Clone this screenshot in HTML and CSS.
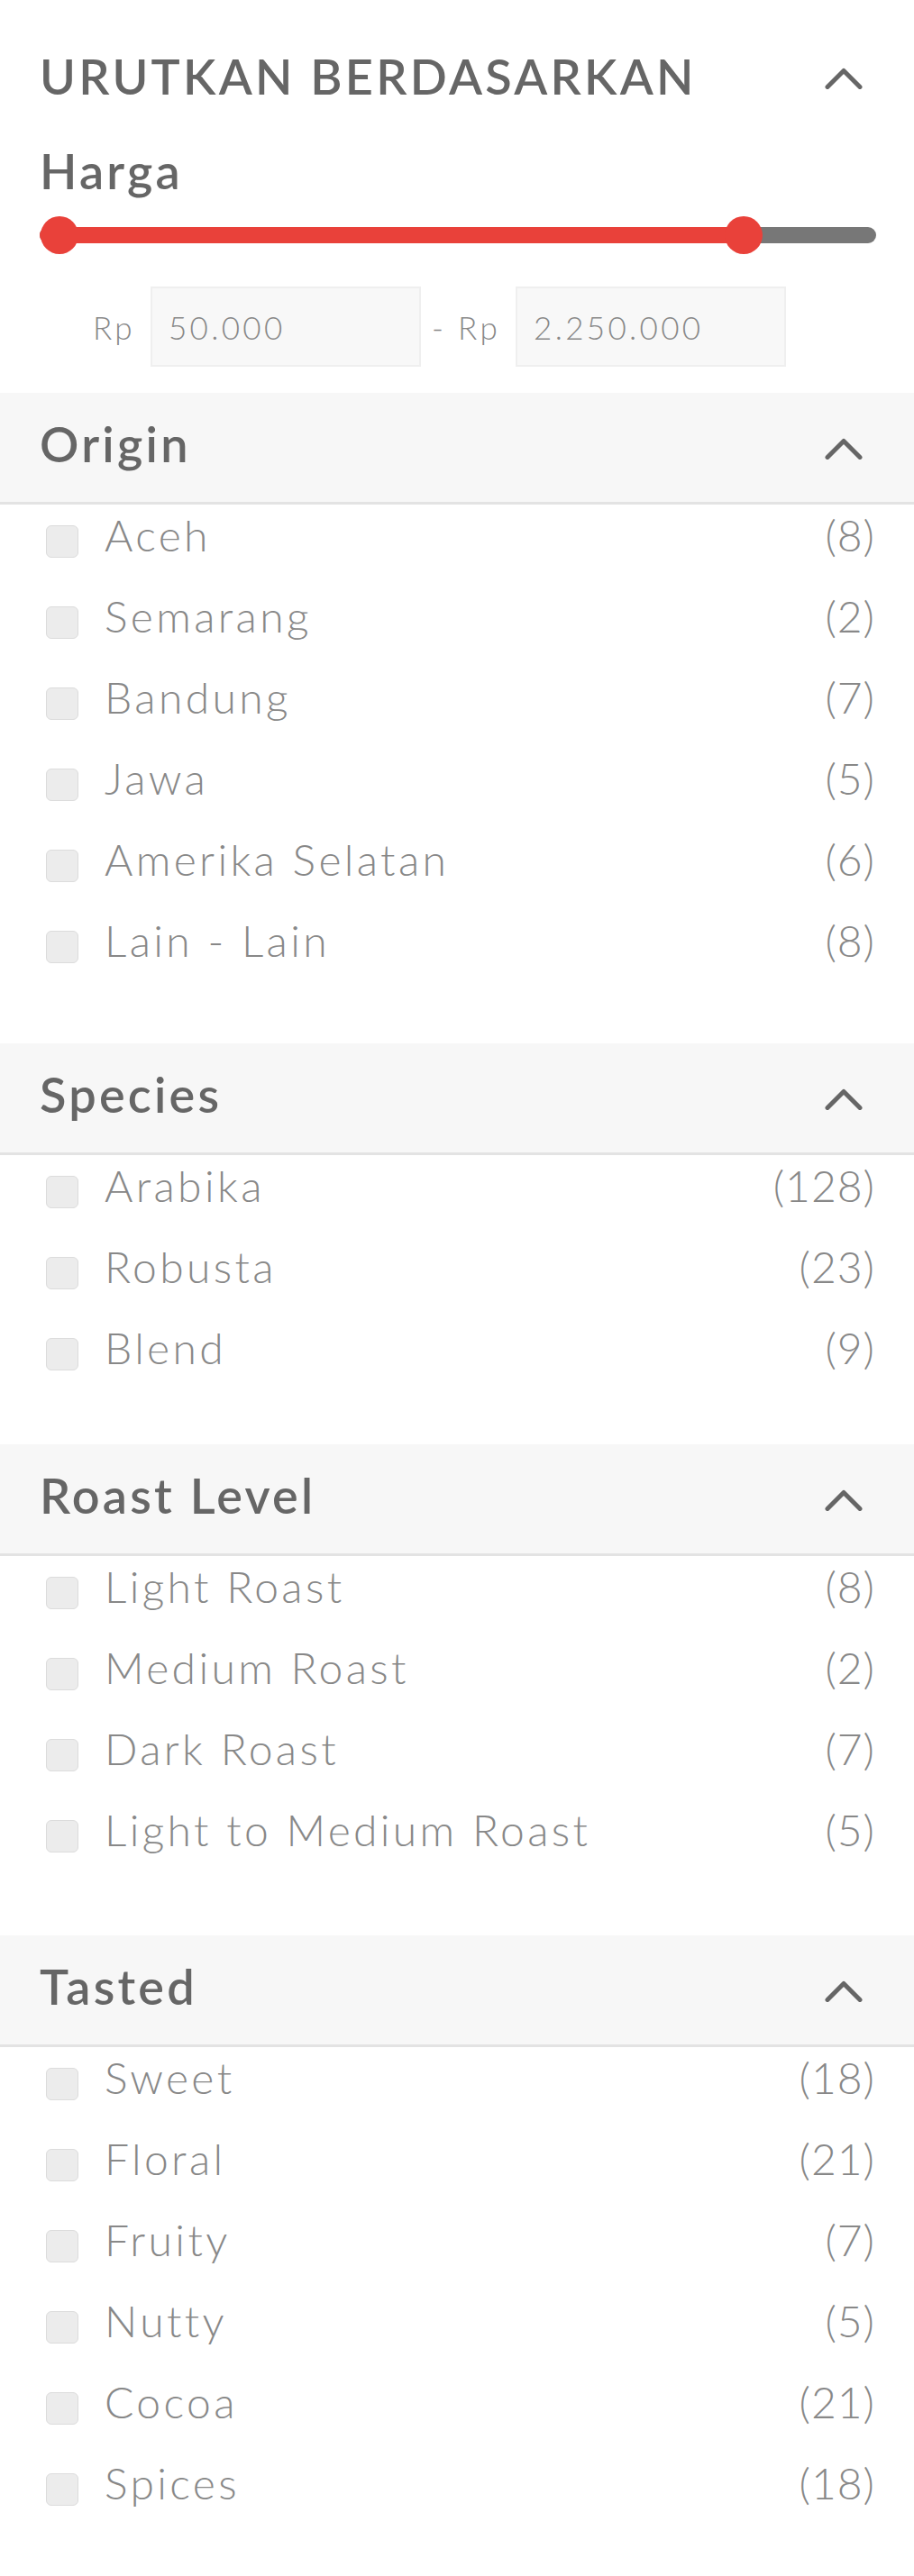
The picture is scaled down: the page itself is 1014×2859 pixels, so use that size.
FILE: index.html
```html
<!DOCTYPE html>
<html lang="id">
<head>
<meta charset="utf-8">
<title>Filter</title>
<link rel="stylesheet" href="styles.css">
</head>
<body>
<div class="panel">
  <div class="sort">
    <div class="sort-head">
      <h2 class="sort-title">URUTKAN BERDASARKAN</h2>
      <svg class="chev chev-title" viewBox="0 0 42 24" width="42" height="24"><path d="M3 21.5 L21 3.5 L39 21.5"/></svg>
    </div>
    <div class="price-label">Harga</div>
    <div class="slider">
      <div class="track"><div class="fill" style="width:84.2%"></div></div>
      <span class="knob" style="left:1px"></span>
      <span class="knob" style="left:calc(84.2% - 21px)"></span>
    </div>
    <div class="price-row">
      <span class="cur">Rp</span>
      <div class="price-box">50.000</div>
      <span class="cur">- Rp</span>
      <div class="price-box">2.250.000</div>
    </div>
  </div>

  <section class="group">
    <div class="group-head">
      <h3 class="group-title">Origin</h3>
      <svg class="chev chev-group" viewBox="0 0 42 24" width="42" height="24"><path d="M3 21.5 L21 3.5 L39 21.5"/></svg>
    </div>
    <ul class="opts">
      <li class="opt"><span class="box"></span><span class="name">Aceh</span><span class="count">(8)</span></li>
      <li class="opt"><span class="box"></span><span class="name">Semarang</span><span class="count">(2)</span></li>
      <li class="opt"><span class="box"></span><span class="name">Bandung</span><span class="count">(7)</span></li>
      <li class="opt"><span class="box"></span><span class="name">Jawa</span><span class="count">(5)</span></li>
      <li class="opt"><span class="box"></span><span class="name">Amerika Selatan</span><span class="count">(6)</span></li>
      <li class="opt"><span class="box"></span><span class="name">Lain - Lain</span><span class="count">(8)</span></li>
    </ul>
  </section>

  <section class="group">
    <div class="group-head">
      <h3 class="group-title">Species</h3>
      <svg class="chev chev-group" viewBox="0 0 42 24" width="42" height="24"><path d="M3 21.5 L21 3.5 L39 21.5"/></svg>
    </div>
    <ul class="opts opts-short">
      <li class="opt"><span class="box"></span><span class="name">Arabika</span><span class="count">(128)</span></li>
      <li class="opt"><span class="box"></span><span class="name">Robusta</span><span class="count">(23)</span></li>
      <li class="opt"><span class="box"></span><span class="name">Blend</span><span class="count">(9)</span></li>
    </ul>
  </section>

  <section class="group">
    <div class="group-head">
      <h3 class="group-title">Roast Level</h3>
      <svg class="chev chev-group" viewBox="0 0 42 24" width="42" height="24"><path d="M3 21.5 L21 3.5 L39 21.5"/></svg>
    </div>
    <ul class="opts opts-tall">
      <li class="opt"><span class="box"></span><span class="name">Light Roast</span><span class="count">(8)</span></li>
      <li class="opt"><span class="box"></span><span class="name">Medium Roast</span><span class="count">(2)</span></li>
      <li class="opt"><span class="box"></span><span class="name">Dark Roast</span><span class="count">(7)</span></li>
      <li class="opt"><span class="box"></span><span class="name">Light to Medium Roast</span><span class="count">(5)</span></li>
    </ul>
  </section>

  <section class="group">
    <div class="group-head">
      <h3 class="group-title">Tasted</h3>
      <svg class="chev chev-group" viewBox="0 0 42 24" width="42" height="24"><path d="M3 21.5 L21 3.5 L39 21.5"/></svg>
    </div>
    <ul class="opts">
      <li class="opt"><span class="box"></span><span class="name">Sweet</span><span class="count">(18)</span></li>
      <li class="opt"><span class="box"></span><span class="name">Floral</span><span class="count">(21)</span></li>
      <li class="opt"><span class="box"></span><span class="name">Fruity</span><span class="count">(7)</span></li>
      <li class="opt"><span class="box"></span><span class="name">Nutty</span><span class="count">(5)</span></li>
      <li class="opt"><span class="box"></span><span class="name">Cocoa</span><span class="count">(21)</span></li>
      <li class="opt"><span class="box"></span><span class="name">Spices</span><span class="count">(18)</span></li>
    </ul>
  </section>
</div>
</body>
</html>
```
FILE: styles.css
```css
* { box-sizing: border-box; }
html, body { margin: 0; padding: 0; background: #fff; }
body { font-family: Lato, "Liberation Sans", sans-serif; color: #888; }

.panel { width: 1014px; }

/* sort block */
.sort { padding: 55px 44px 29px; }
.sort-head { display: flex; align-items: center; justify-content: space-between; height: 60px; }
.sort-title {
  margin: 0; font-size: 54px; font-weight: 600; line-height: 60px;
  letter-spacing: 0.06em; color: #666;
}
.chev { display: block; fill: none; stroke: #666; stroke-width: 5; stroke-linecap: round; stroke-linejoin: round; }
.chev-title { margin: 4px 13px 0 0; }
.chev-group { margin: 10px 13px 0 0; }

.price-label {
  margin-top: 45px; font-size: 54px; font-weight: 600; line-height: 60px;
  letter-spacing: 0.06em; color: #666;
}

.slider { position: relative; height: 42px; margin-top: 20px; margin-right: -2px; }
.track { position: relative; top: 12px; height: 18px; border-radius: 9px; background: #777; overflow: hidden; }
.fill { height: 100%; background: #e9413a; }
.knob {
  position: absolute; top: 0; width: 42px; height: 42px; border-radius: 50%;
  background: #e9413a;
}

.price-row {
  display: flex; align-items: center; margin-top: 36px; padding-left: 59px;
  font-size: 35px; font-weight: 300; letter-spacing: 0.095em; color: #888;
}
.cur { margin-right: 17px; }
.price-box {
  display: flex; align-items: center; width: 300px; height: 89px; padding-left: 18px;
  margin-right: 12px; background: #f8f8f8; border: 2px solid #efefef;
}

/* groups */
.group-head {
  display: flex; align-items: center; justify-content: space-between;
  height: 124px; padding: 0 44px 7px; background: #f7f7f7;
  border-bottom: 3px solid #e3e3e3;
}
.group-title {
  margin: 0; font-size: 54px; font-weight: 600; line-height: 60px;
  letter-spacing: 0.06em; color: #666;
}
.opts {
  list-style: none; margin: 0; padding: 7px 44px 87px;
  display: flex; flex-direction: column; gap: 36px;
}
.opts-short { padding-bottom: 80px; }
.opts-tall { padding-bottom: 90px; }
.opt {
  display: flex; align-items: center; line-height: 54px;
  font-size: 48px; font-weight: 300; color: #888;
}
.box {
  flex: none; width: 36px; height: 36px; margin: 14px 29px 0 7px;
  border-radius: 6px; background: #ececec; border: 1.5px solid #dcdcdc;
}
.name { flex: 1; letter-spacing: 0.07em; }
.count { letter-spacing: 1px; margin-right: -1px; }
```
